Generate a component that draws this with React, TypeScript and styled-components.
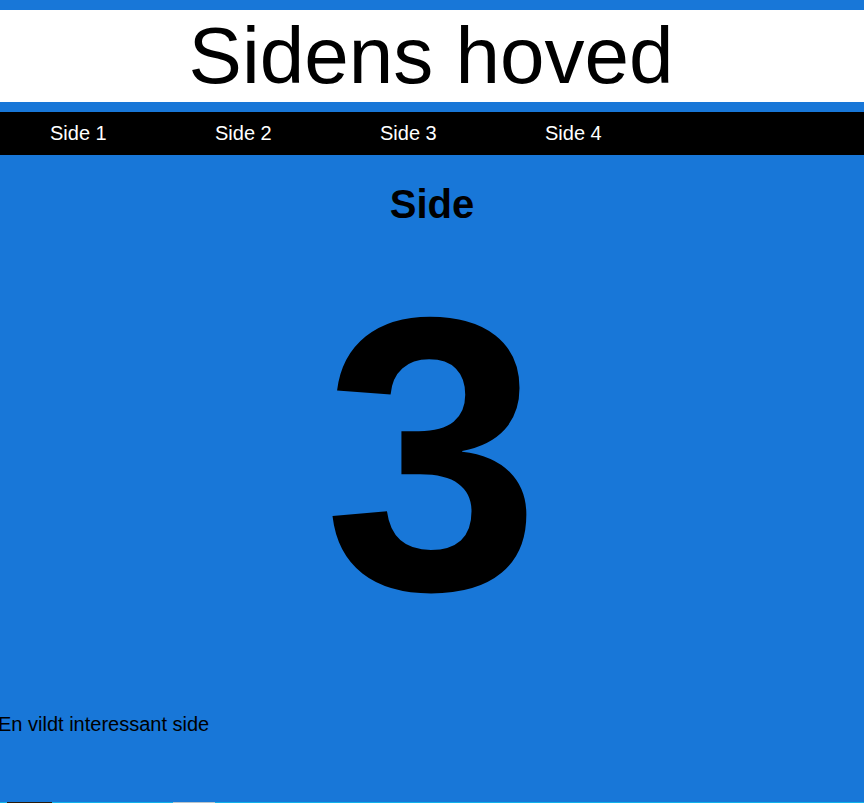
import React from "react";
import styled, { createGlobalStyle } from "styled-components";

const Global = createGlobalStyle`
  html, body { margin: 0; padding: 0; }
  body {
    background: #1877d8;
    font-family: "Liberation Sans", Arial, sans-serif;
    color: #000;
    overflow: hidden;
  }
`;

const Page = styled.div`
  display: flex;
  flex-direction: column;
  padding-top: 10px;
  height: 803px;
  box-sizing: border-box;
`;

const Header = styled.header`
  background: #fff;
  display: flex;
  justify-content: center;
`;

const Title = styled.h1`
  margin: 0 0 0 -2px;
  font-size: 80px;
  font-weight: 400;
  line-height: 92px;
`;

const Nav = styled.nav`
  margin-top: 10px;
  background: #000;
  height: 43px;
  display: flex;
  align-items: center;
  padding-left: 50px;
`;

const NavLink = styled.a`
  color: #fff;
  font-size: 20px;
  width: 165px;
  text-decoration: none;
`;

const Main = styled.main`
  flex: 1;
  display: flex;
  flex-direction: column;
`;

const Heading = styled.h2`
  margin: 26px 0 0;
  text-align: center;
  font-size: 40px;
  line-height: 46px;
  font-weight: 700;
`;

const Big = styled.div`
  margin-top: 4px;
  text-align: center;
  font-size: 390px;
  font-weight: 700;
  line-height: 447px;
`;

const Text = styled.p`
  margin: 35px 0 0 -2px;
  font-size: 20px;
  line-height: 23px;
`;

const Footer = styled.footer`
  margin-top: auto;
  height: 1px;
  background: #12b2ea;
  display: flex;
  align-items: stretch;
`;

const Chip = styled.span<{ $left: number; $w: number; $c: string }>`
  margin-left: ${(p) => p.$left}px;
  width: ${(p) => p.$w}px;
  background: ${(p) => p.$c};
`;

export default function App() {
  return (
    <>
      <Global />
      <Page>
        <Header>
          <Title>Sidens hoved</Title>
        </Header>
        <Nav>
          <NavLink href="#">Side 1</NavLink>
          <NavLink href="#">Side 2</NavLink>
          <NavLink href="#">Side 3</NavLink>
          <NavLink href="#">Side 4</NavLink>
        </Nav>
        <Main>
          <Heading>Side</Heading>
          <Big>3</Big>
          <Text>En vildt interessant side</Text>
        </Main>
        <Footer>
          <Chip $left={7} $w={45} $c="#2a1a08" />
          <Chip $left={121} $w={42} $c="#b8c4cc" />
        </Footer>
      </Page>
    </>
  );
}
